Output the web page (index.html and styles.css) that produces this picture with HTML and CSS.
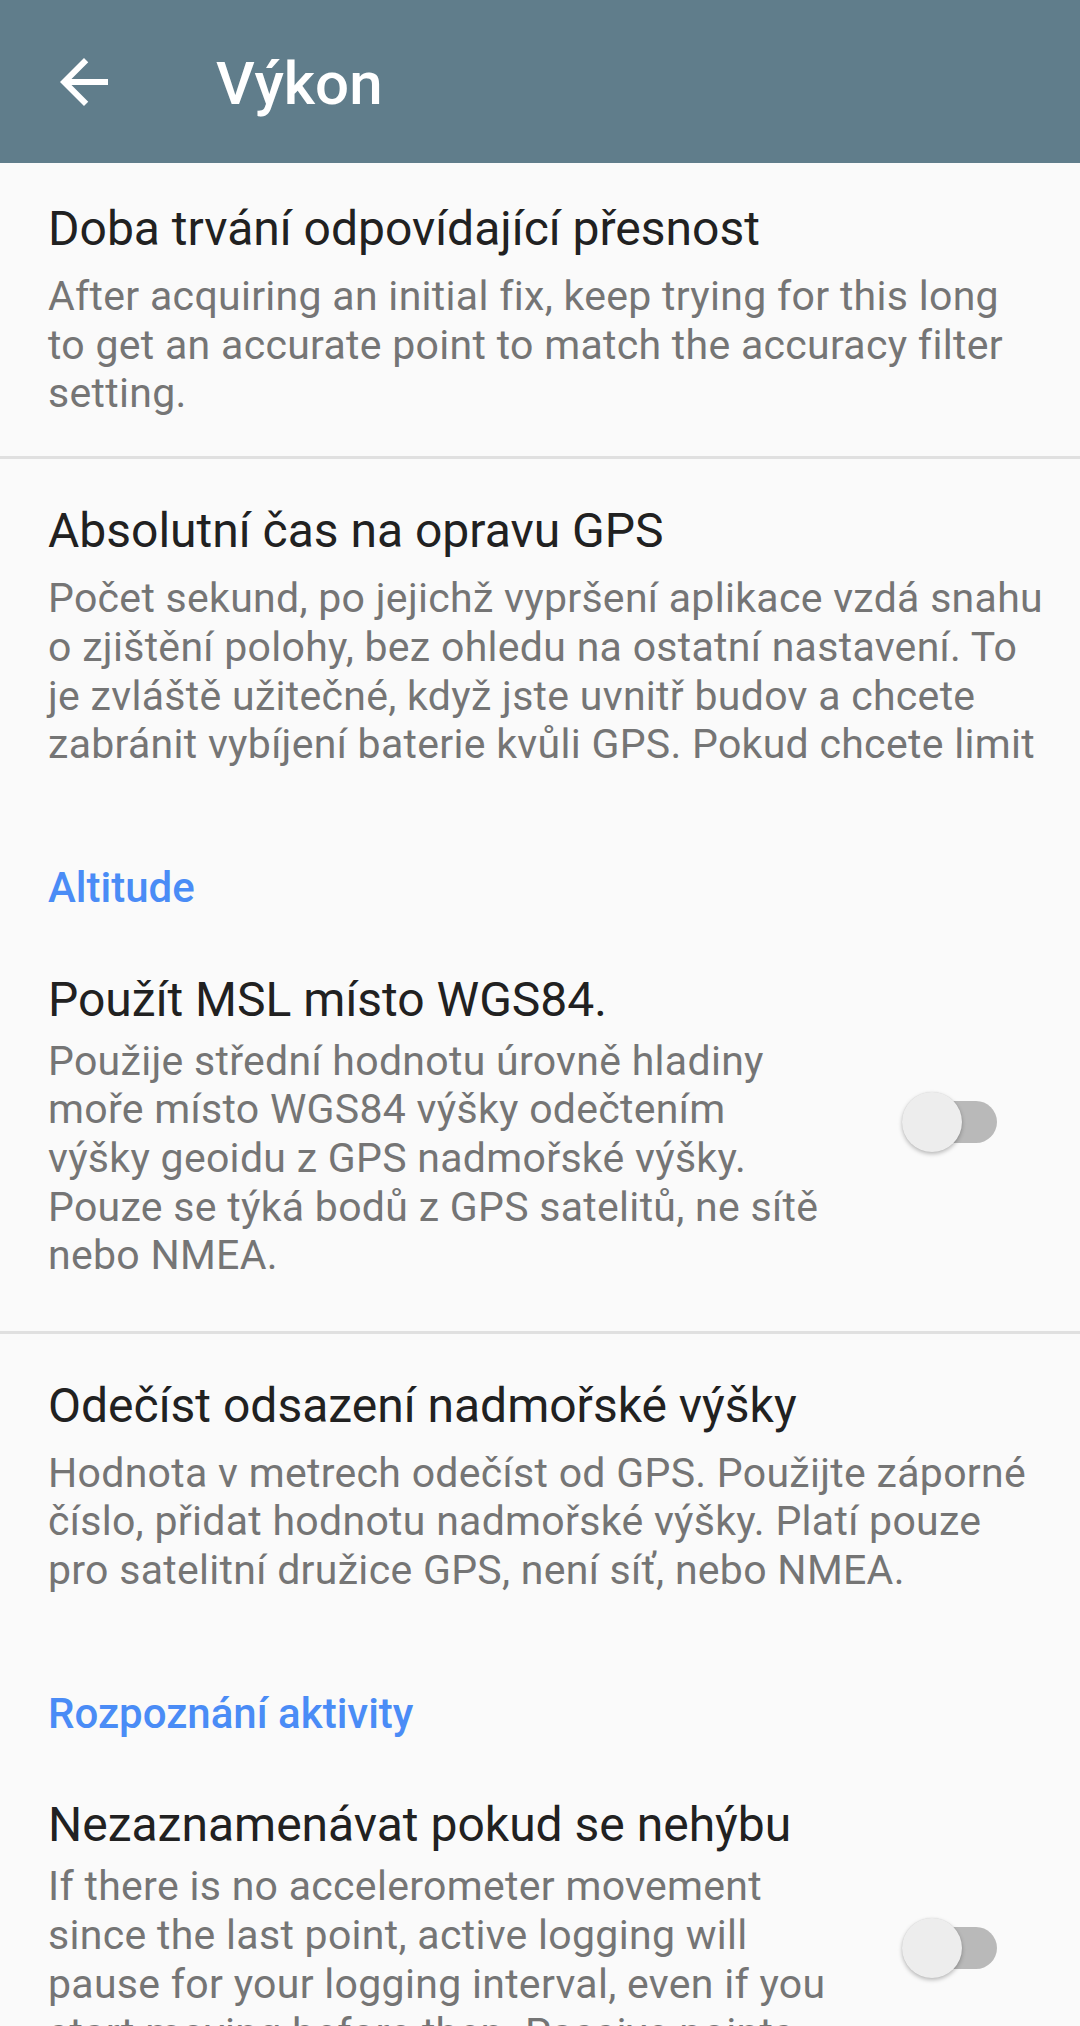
FILE: index.html
```html
<!DOCTYPE html>
<html lang="cs">
<head>
<meta charset="utf-8">
<title>Výkon</title>
<link rel="stylesheet" href="styles.css">
</head>
<body>
<div class="screen">
  <header class="toolbar">
    <button class="nav-btn" aria-label="Zpět">
      <svg class="nav-icon" viewBox="0 0 24 24" width="72" height="72"><path d="M20 11H7.83l5.59-5.59L12 4l-8 8 8 8 1.41-1.41L7.83 13H20v-2z"/></svg>
    </button>
    <h1 class="toolbar-title">Výkon</h1>
  </header>

  <main class="list">
    <section class="pref">
      <div class="pref-title">Doba trvání odpovídající přesnost</div>
      <div class="pref-summary">After acquiring an initial fix, keep trying for this long<br>to get an accurate point to match the accuracy filter<br>setting.</div>
    </section>
    <div class="divider"></div>
    <section class="pref after-divider">
      <div class="pref-title">Absolutní čas na opravu GPS</div>
      <div class="pref-summary">Počet sekund, po jejichž vypršení aplikace vzdá snahu<br>o zjištění polohy, bez ohledu na ostatní nastavení. To<br>je zvláště užitečné, když jste uvnitř budov a chcete<br>zabránit vybíjení baterie kvůli GPS. Pokud chcete limit</div>
    </section>

    <div class="category">Altitude</div>
    <section class="pref-row">
      <div class="pref-text">
        <div class="pref-title">Použít MSL místo WGS84.</div>
        <div class="pref-summary">Použije střední hodnotu úrovně hladiny<br>moře místo WGS84 výšky odečtením<br>výšky geoidu z GPS nadmořské výšky.<br>Pouze se týká bodů z GPS satelitů, ne sítě<br>nebo NMEA.</div>
      </div>
      <div class="switch" role="switch" aria-checked="false">
        <span class="switch-track"></span>
        <span class="switch-thumb"></span>
      </div>
    </section>
    <div class="divider"></div>
    <section class="pref after-divider">
      <div class="pref-title">Odečíst odsazení nadmořské výšky</div>
      <div class="pref-summary">Hodnota v metrech odečíst od GPS. Použijte záporné<br>číslo, přidat hodnotu nadmořské výšky. Platí pouze<br>pro satelitní družice GPS, není síť, nebo NMEA.</div>
    </section>

    <div class="category">Rozpoznání aktivity</div>
    <section class="pref-row">
      <div class="pref-text">
        <div class="pref-title">Nezaznamenávat pokud se nehýbu</div>
        <div class="pref-summary">If there is no accelerometer movement<br>since the last point, active logging will<br>pause for your logging interval, even if you<br>start moving before then. Passive points<br>are not affected.</div>
      </div>
      <div class="switch" role="switch" aria-checked="false">
        <span class="switch-track"></span>
        <span class="switch-thumb"></span>
      </div>
    </section>
  </main>
</div>
</body>
</html>
```

FILE: styles.css
```css
html, body {
  margin: 0;
  padding: 0;
  background: #fafafa;
}

body {
  font-family: Roboto, "Noto Sans", "Liberation Sans", sans-serif;
  overflow: hidden;
}

.screen {
  width: 1080px;
  height: 2026px;
  overflow: hidden;
  background: #fafafa;
}

/* Toolbar */
.toolbar {
  height: 163px;
  background: #607d8b;
  display: flex;
  align-items: center;
  padding-left: 48px;
  box-sizing: border-box;
}

.nav-btn {
  width: 72px;
  height: 72px;
  padding: 0;
  margin: 0;
  border: 0;
  background: transparent;
  display: flex;
}

.nav-icon {
  fill: #ffffff;
  display: block;
}

.toolbar-title {
  margin: 0 0 0 96px;
  padding-top: 4px;
  font-size: 60px;
  line-height: 70px;
  font-weight: 500;
  color: #ffffff;
}

/* List */
.list {
  display: flex;
  flex-direction: column;
}

.pref {
  padding: 38px 24px 38px 48px;
}

.pref.after-divider {
  padding-top: 44px;
}

.pref-title {
  font-size: 48px;
  line-height: 56px;
  color: #212121;
  white-space: nowrap;
}

.pref-summary {
  margin-top: 15px;
  font-size: 41px;
  letter-spacing: 0.3px;
  line-height: 48.7px;
  color: #757575;
  white-space: nowrap;
}

.divider {
  height: 3px;
  background: #e0e0e0;
}

.category {
  padding: 56px 48px 0;
  font-size: 42px;
  line-height: 50px;
  font-weight: 500;
  color: #4a8cf6;
}

/* Rows with a switch */
.pref-row {
  display: flex;
  padding-left: 48px;
}

.pref-text {
  flex: 1;
  min-width: 0;
  padding: 58.7px 0 50.5px;
}

.pref-row .pref-summary {
  margin-top: 9px;
}

.switch {
  position: relative;
  flex: none;
  align-self: center;
  width: 95px;
  height: 62px;
  margin-right: 83px;
}

.switch-track {
  position: absolute;
  left: 6px;
  right: 0;
  top: 10px;
  height: 42px;
  border-radius: 21px;
  background: #b9b9b9;
}

.switch-thumb {
  position: absolute;
  left: 0;
  top: 1px;
  width: 60px;
  height: 60px;
  border-radius: 50%;
  background: #ededed;
  box-shadow: 0 2px 4px rgba(0, 0, 0, 0.26), 0 0 1px rgba(0, 0, 0, 0.12);
}
```
